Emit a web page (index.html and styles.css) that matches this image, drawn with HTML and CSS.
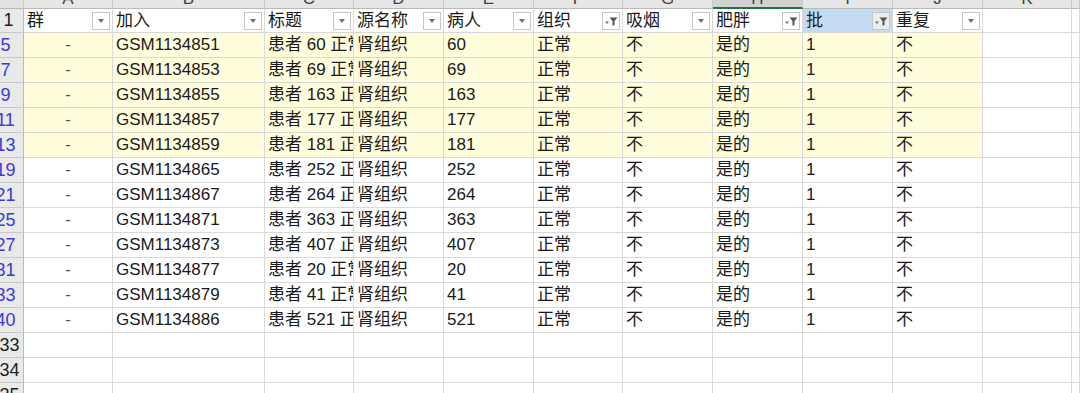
FILE: index.html
```html
<!DOCTYPE html>
<html lang="zh">
<head>
<meta charset="utf-8">
<title>Sheet</title>
<link rel="stylesheet" href="styles.css">
</head>
<body>
<div class="sheet">
  <div class="row colhdr">
    <div class="c corner"></div>
    <div class="c">A</div><div class="c">B</div><div class="c">C</div><div class="c">D</div><div class="c">E</div><div class="c">F</div><div class="c">G</div><div class="c sel">H</div><div class="c">I</div><div class="c">J</div><div class="c">K</div><div class="c"></div>
  </div>

  <div class="row hdr">
    <div class="c rn">1</div>
    <div class="c"><span class="t">群</span><span class="btn"><i class="tri"></i></span></div>
    <div class="c"><span class="t">加入</span><span class="btn"><i class="tri"></i></span></div>
    <div class="c"><span class="t">标题</span><span class="btn"><i class="tri"></i></span></div>
    <div class="c"><span class="t">源名称</span><span class="btn"><i class="tri"></i></span></div>
    <div class="c"><span class="t">病人</span><span class="btn"><i class="tri"></i></span></div>
    <div class="c"><span class="t">组织</span><span class="btn"><svg viewBox="0 0 18 18" width="18" height="18"><path d="M3 9.5h4l-2 2.5z" fill="#707070"/><path d="M7.5 5.5h8l-3 3.6v3.8l-2 1v-4.8z" fill="#555"/></svg></span></div>
    <div class="c"><span class="t">吸烟</span><span class="btn"><i class="tri"></i></span></div>
    <div class="c"><span class="t">肥胖</span><span class="btn"><svg viewBox="0 0 18 18" width="18" height="18"><path d="M3 9.5h4l-2 2.5z" fill="#707070"/><path d="M7.5 5.5h8l-3 3.6v3.8l-2 1v-4.8z" fill="#555"/></svg></span></div>
    <div class="c active"><span class="t">批</span><span class="btn grey"><svg viewBox="0 0 18 18" width="18" height="18"><path d="M3 9.5h4l-2 2.5z" fill="#707070"/><path d="M7.5 5.5h8l-3 3.6v3.8l-2 1v-4.8z" fill="#555"/></svg></span></div>
    <div class="c"><span class="t">重复</span><span class="btn"><i class="tri"></i></span></div>
    <div class="c plain"></div>
    <div class="c plain"></div>
  </div>

  <div class="row hl"><div class="c rn f">5</div><div class="c ctr">-</div><div class="c">GSM1134851</div><div class="c">患者 60 正常组织</div><div class="c">肾组织</div><div class="c">60</div><div class="c">正常</div><div class="c">不</div><div class="c">是的</div><div class="c">1</div><div class="c">不</div><div class="c plain"></div><div class="c plain"></div></div>
  <div class="row hl"><div class="c rn f">7</div><div class="c ctr">-</div><div class="c">GSM1134853</div><div class="c">患者 69 正常组织</div><div class="c">肾组织</div><div class="c">69</div><div class="c">正常</div><div class="c">不</div><div class="c">是的</div><div class="c">1</div><div class="c">不</div><div class="c plain"></div><div class="c plain"></div></div>
  <div class="row hl"><div class="c rn f">9</div><div class="c ctr">-</div><div class="c">GSM1134855</div><div class="c">患者 163 正常组织</div><div class="c">肾组织</div><div class="c">163</div><div class="c">正常</div><div class="c">不</div><div class="c">是的</div><div class="c">1</div><div class="c">不</div><div class="c plain"></div><div class="c plain"></div></div>
  <div class="row hl"><div class="c rn f">11</div><div class="c ctr">-</div><div class="c">GSM1134857</div><div class="c">患者 177 正常组织</div><div class="c">肾组织</div><div class="c">177</div><div class="c">正常</div><div class="c">不</div><div class="c">是的</div><div class="c">1</div><div class="c">不</div><div class="c plain"></div><div class="c plain"></div></div>
  <div class="row hl"><div class="c rn f">13</div><div class="c ctr">-</div><div class="c">GSM1134859</div><div class="c">患者 181 正常组织</div><div class="c">肾组织</div><div class="c">181</div><div class="c">正常</div><div class="c">不</div><div class="c">是的</div><div class="c">1</div><div class="c">不</div><div class="c plain"></div><div class="c plain"></div></div>
  <div class="row"><div class="c rn f">19</div><div class="c ctr">-</div><div class="c">GSM1134865</div><div class="c">患者 252 正常组织</div><div class="c">肾组织</div><div class="c">252</div><div class="c">正常</div><div class="c">不</div><div class="c">是的</div><div class="c">1</div><div class="c">不</div><div class="c plain"></div><div class="c plain"></div></div>
  <div class="row"><div class="c rn f">21</div><div class="c ctr">-</div><div class="c">GSM1134867</div><div class="c">患者 264 正常组织</div><div class="c">肾组织</div><div class="c">264</div><div class="c">正常</div><div class="c">不</div><div class="c">是的</div><div class="c">1</div><div class="c">不</div><div class="c plain"></div><div class="c plain"></div></div>
  <div class="row"><div class="c rn f">25</div><div class="c ctr">-</div><div class="c">GSM1134871</div><div class="c">患者 363 正常组织</div><div class="c">肾组织</div><div class="c">363</div><div class="c">正常</div><div class="c">不</div><div class="c">是的</div><div class="c">1</div><div class="c">不</div><div class="c plain"></div><div class="c plain"></div></div>
  <div class="row"><div class="c rn f">27</div><div class="c ctr">-</div><div class="c">GSM1134873</div><div class="c">患者 407 正常组织</div><div class="c">肾组织</div><div class="c">407</div><div class="c">正常</div><div class="c">不</div><div class="c">是的</div><div class="c">1</div><div class="c">不</div><div class="c plain"></div><div class="c plain"></div></div>
  <div class="row"><div class="c rn f">31</div><div class="c ctr">-</div><div class="c">GSM1134877</div><div class="c">患者 20 正常组织</div><div class="c">肾组织</div><div class="c">20</div><div class="c">正常</div><div class="c">不</div><div class="c">是的</div><div class="c">1</div><div class="c">不</div><div class="c plain"></div><div class="c plain"></div></div>
  <div class="row"><div class="c rn f">33</div><div class="c ctr">-</div><div class="c">GSM1134879</div><div class="c">患者 41 正常组织</div><div class="c">肾组织</div><div class="c">41</div><div class="c">正常</div><div class="c">不</div><div class="c">是的</div><div class="c">1</div><div class="c">不</div><div class="c plain"></div><div class="c plain"></div></div>
  <div class="row"><div class="c rn f">40</div><div class="c ctr">-</div><div class="c">GSM1134886</div><div class="c">患者 521 正常组织</div><div class="c">肾组织</div><div class="c">521</div><div class="c">正常</div><div class="c">不</div><div class="c">是的</div><div class="c">1</div><div class="c">不</div><div class="c plain"></div><div class="c plain"></div></div>
  <div class="row"><div class="c rn">33</div><div class="c"></div><div class="c"></div><div class="c"></div><div class="c"></div><div class="c"></div><div class="c"></div><div class="c"></div><div class="c"></div><div class="c"></div><div class="c"></div><div class="c"></div><div class="c"></div></div>
  <div class="row"><div class="c rn">34</div><div class="c"></div><div class="c"></div><div class="c"></div><div class="c"></div><div class="c"></div><div class="c"></div><div class="c"></div><div class="c"></div><div class="c"></div><div class="c"></div><div class="c"></div><div class="c"></div></div>
  <div class="row"><div class="c rn">35</div><div class="c"></div><div class="c"></div><div class="c"></div><div class="c"></div><div class="c"></div><div class="c"></div><div class="c"></div><div class="c"></div><div class="c"></div><div class="c"></div><div class="c"></div><div class="c"></div></div>
</div>
</body>
</html>
```

FILE: styles.css
```css
html, body {
  margin: 0;
  padding: 0;
  background: #ffffff;
  overflow: hidden;
}
body {
  width: 1080px;
  height: 393px;
}
.sheet {
  margin-top: -15px;
  margin-left: -12px;
  width: 1092px;
  font-family: "Liberation Sans", "Noto Sans CJK SC", sans-serif;
  font-size: 17px;
  color: #1a1a1a;
}
.row {
  display: grid;
  grid-template-columns: 36px 89px 152px 89px 90px 90px 89px 90px 90px 90px 90px 89px 8px;
  height: 25px;
}
.c {
  box-sizing: border-box;
  border-right: 1px solid #d9d9d9;
  border-bottom: 1px solid #d9d9d9;
  padding: 0 3px;
  line-height: 24px;
  white-space: nowrap;
  overflow: hidden;
}
.ctr {
  text-align: center;
  color: #555;
}
.hl .c:not(.rn):not(.plain) {
  background: #fffddc;
}
.rn {
  background: #e9e9e9;
  border-right: 1px solid #b9b9b9;
  border-bottom: 1px solid #c9c9c9;
  text-align: center;
  font-size: 18px;
  color: #222;
  padding: 0 0 0 8px;
}
.rn.f {
  color: #3a3ad6;
  padding: 0;
}
.colhdr {
  height: 24px;
}
.colhdr .c {
  background: #e6e6e6;
  border-right: 1px solid #c9c9c9;
  border-bottom: 1px solid #b9b9b9;
  text-align: center;
  color: #444;
  padding-top: 4px;
  line-height: 20px;
}
.colhdr .sel {
  background: #d2d2d2;
  border-bottom: 2px solid #217346;
}
.colhdr .corner {
  background: #e2e2e2;
}
.hdr {
  height: 24px;
}
.hdr .c {
  display: flex;
  align-items: center;
  justify-content: space-between;
  padding: 0 2px 0 3px;
  background: #ffffff;
}
.hdr .rn {
  display: block;
  background: #e9e9e9;
  padding: 0 0 0 6px;
  line-height: 23px;
}
.hdr .active {
  background: #c3dcf2;
}
.hdr .plain {
  border-right: 1px solid #d9d9d9;
}
.t {
  overflow: hidden;
}
.btn {
  flex: none;
  box-sizing: border-box;
  width: 18px;
  height: 18px;
  border: 1px solid #c6c6c6;
  background: #ffffff;
  display: flex;
  align-items: center;
  justify-content: center;
}
.btn svg {
  display: block;
  margin: -1px;
}
.btn.grey {
  background: #ececec;
}
.tri {
  display: block;
  width: 0;
  height: 0;
  border-left: 3.5px solid transparent;
  border-right: 3.5px solid transparent;
  border-top: 4px solid #707070;
  margin-top: 1px;
}
```
